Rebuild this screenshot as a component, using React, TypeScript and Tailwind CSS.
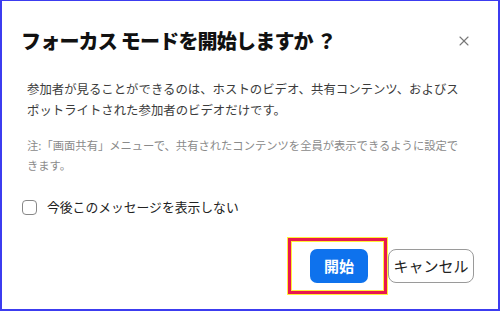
import { X } from 'lucide-react';

export default function App() {
  return (
    <div
      className="relative w-[500px] h-[311px] bg-white border-x-2 border-b-2 border-t border-[#3c3cf0] flex flex-col"
      style={{ fontFamily: '"Noto Sans CJK JP", "Noto Sans", sans-serif' }}
    >
      {/* Header */}
      <div className="flex items-center justify-between pl-[19px] pr-[26px] pt-[27px]">
        <h1 className="text-[20px] leading-[26px] font-black text-[#111] tracking-[-0.8px]">
          フォーカス モードを開始しますか ？
        </h1>
        <X className="w-[16px] h-[16px] text-[#777]" strokeWidth={1.6} />
      </div>

      {/* Body */}
      <div className="px-[25px] mt-[25px]">
        <p className="text-[12.4px] leading-[21px] text-[#3c3c3c] whitespace-nowrap">
          参加者が見ることができるのは、ホストのビデオ、共有コンテンツ、およびス
          <br />
          ポットライトされた参加者のビデオだけです。
        </p>
        <p className="mt-[14px] text-[11.3px] leading-[20px] text-[#8a8a8a] whitespace-nowrap">
          注:「画面共有」メニューで、共有されたコンテンツを全員が表示できるように設定で
          <br />
          きます。
        </p>
      </div>

      {/* Checkbox */}
      <label className="flex items-center gap-[10px] pl-[20px] mt-[22px]">
        <span className="w-[15px] h-[15px] rounded-[4px] border border-[#888] bg-white" />
        <span className="text-[12.8px] leading-[20px] text-[#222]">今後このメッセージを表示しない</span>
      </label>

      {/* Buttons */}
      <div className="flex justify-end gap-[20px] pr-[24px] mt-auto mb-[26px]">
        <button className="w-[58px] h-[34px] rounded-[7px] bg-[#0e72ed] text-white text-[15px] font-bold">
          開始
        </button>
        <button className="w-[86px] h-[34px] rounded-[8px] border border-[#9a9a9a] bg-white text-[#222] text-[15px]">
          キャンセル
        </button>
      </div>

      {/* Highlight annotation */}
      <div className="absolute left-[285px] top-[236px] w-[101px] h-[58px] border border-[#ffef3a]">
        <div className="w-full h-full border-[3px] border-[#e8174e]">
          <div className="w-full h-full border border-[#ffef3a]" />
        </div>
      </div>
    </div>
  );
}
